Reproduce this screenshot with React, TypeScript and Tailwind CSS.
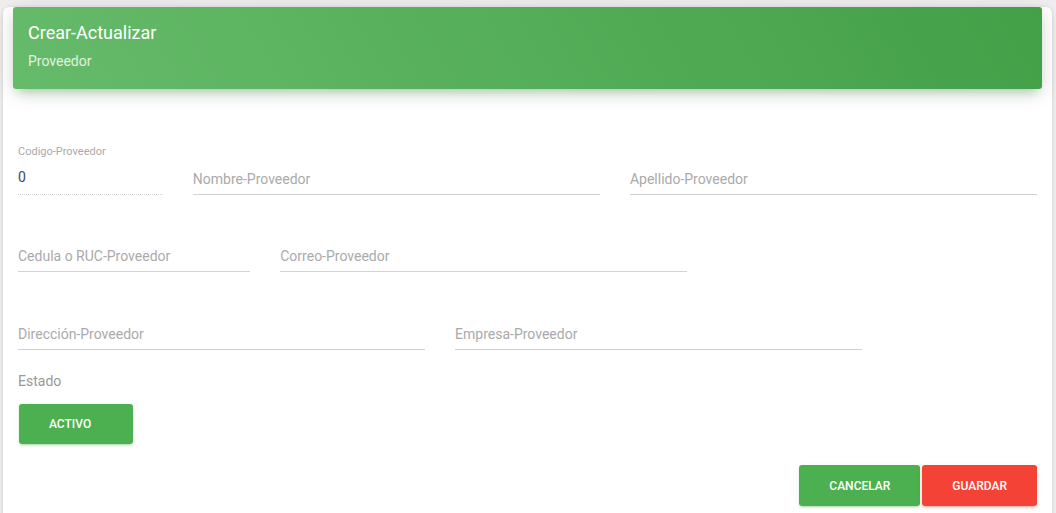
import React from 'react';

const FONT = { fontFamily: 'Roboto, "Helvetica Neue", Arial, sans-serif' };

function Field({ placeholder, className }: { placeholder: string; className: string }) {
  return (
    <div className={`px-[15px] pt-[27px] ${className}`}>
      <input
        type="text"
        placeholder={placeholder}
        className="block w-full h-[36px] pt-[4px] border-b border-[#d2d2d2] bg-transparent text-[14px] text-[#3c4858] placeholder:text-[#aaaaaa] outline-none"
      />
    </div>
  );
}

export default function App() {
  return (
    <div className="min-h-screen bg-[#eeeeee] pt-[27px] pl-[3px] pr-[4px]" style={FONT}>
      <div className="bg-white rounded-[6px] shadow-[0_1px_4px_0_rgba(0,0,0,0.14)] pb-[20px]">
        {/* header */}
        <div className="mx-[10px] -mt-[20px] h-[82px] rounded-[3px] px-[15px] pt-[15px] text-white bg-[linear-gradient(60deg,#66bb6a,#43a047)] shadow-[0_4px_20px_0_rgba(0,0,0,0.14),0_7px_10px_-5px_rgba(76,175,80,0.4)]">
          <h4 className="text-[18px] leading-[22px] font-normal">Crear-Actualizar</h4>
          <p className="mt-[7px] text-[14px] leading-[20px] text-white/80">Proveedor</p>
        </div>

        <div className="pt-[43px]">
          {/* row 1 */}
          <div className="flex">
            <div className="w-2/12 px-[15px]">
              <div className="h-[27px] flex items-end pb-[1px] text-[11px] leading-[12px] text-[#aaaaaa]">
                Codigo-Proveedor
              </div>
              <input
                type="text"
                disabled
                value="0"
                className="block w-full h-[36px] border-b border-dotted border-[#d2d2d2] bg-transparent text-[14px] text-[#3c4858] outline-none"
              />
            </div>
            <Field placeholder="Nombre-Proveedor" className="w-5/12" />
            <Field placeholder="Apellido-Proveedor" className="w-5/12" />
          </div>

          {/* row 2 */}
          <div className="flex mt-[14px]">
            <Field placeholder="Cedula o RUC-Proveedor" className="w-3/12" />
            <Field placeholder="Correo-Proveedor" className="w-5/12" />
          </div>

          {/* row 3 */}
          <div className="flex mt-[15px]">
            <Field placeholder="Dirección-Proveedor" className="w-5/12" />
            <Field placeholder="Empresa-Proveedor" className="w-5/12" />
          </div>

          <div className="px-[15px]">
            <p className="mt-[21px] text-[14px] leading-[20px] text-[#999999]">Estado</p>
            <button
              type="button"
              className="mt-[13px] ml-px w-[114px] h-[40px] pl-[30px] text-left rounded-[3px] bg-[#4caf50] text-white text-[12px] font-medium uppercase shadow-[0_2px_2px_0_rgba(76,175,80,0.14),0_3px_1px_-2px_rgba(76,175,80,0.2),0_1px_5px_0_rgba(76,175,80,0.12)]"
            >
              Activo
            </button>
          </div>

          <div className="mt-[21px] px-[15px] flex justify-end gap-[2px]">
            <button
              type="button"
              className="h-[41px] px-[30px] rounded-[3px] bg-[#4caf50] text-white text-[12px] font-medium uppercase shadow-[0_2px_2px_0_rgba(76,175,80,0.14),0_3px_1px_-2px_rgba(76,175,80,0.2),0_1px_5px_0_rgba(76,175,80,0.12)]"
            >
              Cancelar
            </button>
            <button
              type="button"
              className="h-[41px] px-[30px] rounded-[3px] bg-[#f44336] text-white text-[12px] font-medium uppercase shadow-[0_2px_2px_0_rgba(244,67,54,0.14),0_3px_1px_-2px_rgba(244,67,54,0.2),0_1px_5px_0_rgba(244,67,54,0.12)]"
            >
              Guardar
            </button>
          </div>
        </div>
      </div>
    </div>
  );
}
